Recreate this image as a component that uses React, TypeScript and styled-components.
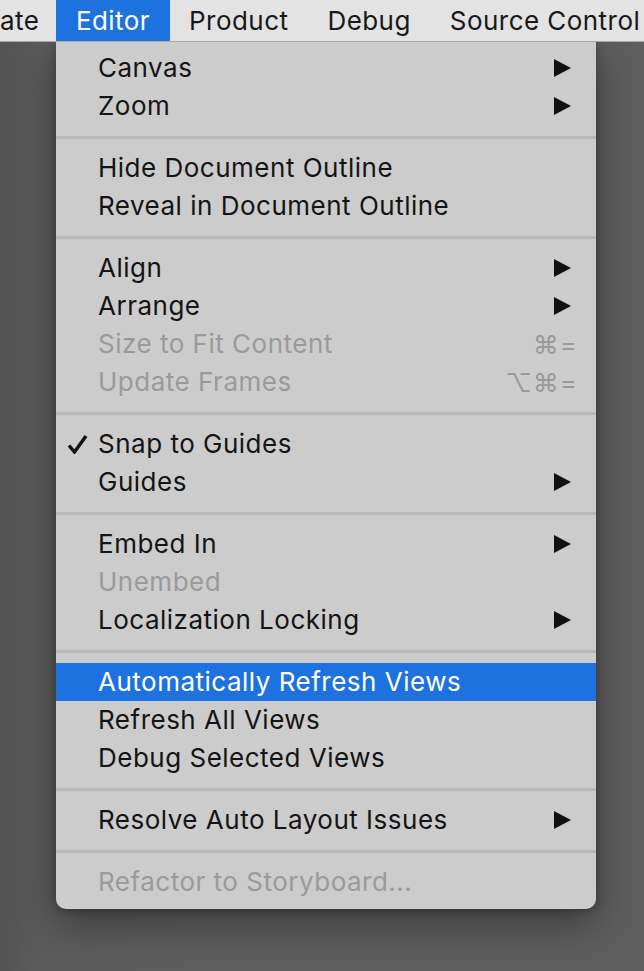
import React from "react";
import styled, { createGlobalStyle } from "styled-components";

const GlobalStyle = createGlobalStyle`
  html, body {
    margin: 0;
    padding: 0;
    background: #5e5e5e;
  }
  body {
    font-family: Inter, "Noto Sans", "Liberation Sans", sans-serif;
    -webkit-font-smoothing: antialiased;
  }
`;

const Screen = styled.div`
  width: 644px;
  height: 971px;
  overflow: hidden;
  background: linear-gradient(90deg, #535353 0px, #5b5b5b 40px, #5e5e5e 200px);
  display: flex;
  flex-direction: column;
`;

const MenuBar = styled.div`
  height: 42px;
  flex: 0 0 42px;
  background: #e3e3e3;
  border-bottom: 1px solid #a9a9a9;
  box-sizing: border-box;
  display: flex;
  align-items: stretch;
  white-space: nowrap;
  position: relative;
  z-index: 2;
`;

const BarItem = styled.div<{ $active?: boolean; $first?: boolean }>`
  display: flex;
  align-items: center;
  padding: 0 ${(p) => (p.$first ? "17px" : "19.5px")} 0 ${(p) => (p.$first ? "0" : "19.5px")};
  font-size: 26px;
  letter-spacing: 0.45px;
  color: ${(p) => (p.$active ? "#ffffff" : "#181818")};
  background: ${(p) => (p.$active ? "#1d72e0" : "transparent")};
`;

const Menu = styled.div`
  margin-left: 56px;
  width: 540px;
  background: #cccccc;
  border-radius: 0 0 10px 10px;
  box-shadow: 0 14px 40px rgba(0, 0, 0, 0.38), 0 2px 8px rgba(0, 0, 0, 0.25);
  padding: 7px 0 8px;
  display: flex;
  flex-direction: column;
  position: relative;
  z-index: 1;
`;

const Item = styled.div<{ $disabled?: boolean; $active?: boolean }>`
  height: 38px;
  display: grid;
  grid-template-columns: 42px 1fr auto;
  align-items: center;
  padding-right: 21px;
  font-size: 26px;
  letter-spacing: 0.5px;
  color: ${(p) => (p.$active ? "#ffffff" : p.$disabled ? "#9a9a9a" : "#141414")};
  background: ${(p) => (p.$active ? "#1d72e0" : "transparent")};
`;

const CheckCell = styled.div`
  display: flex;
  align-items: center;
  justify-content: flex-end;
  padding-right: 10px;
`;

const Label = styled.span`
  line-height: 38px;
  white-space: nowrap;
`;

const Shortcut = styled.span`
  color: #9a9a9a;
  font-size: 26px;
  letter-spacing: 1px;
  margin-right: -3px;
`;

const Arrow = styled.svg`
  width: 18px;
  height: 18px;
  margin-right: 3px;
  display: block;
`;

const Separator = styled.div`
  height: 3px;
  margin: 11px 0 10px;
  background: #b9b9b9;
`;

type Entry =
  | { sep: true }
  | {
      sep?: false;
      label: string;
      submenu?: boolean;
      disabled?: boolean;
      checked?: boolean;
      active?: boolean;
      shortcut?: string;
    };

const entries: Entry[] = [
  { label: "Canvas", submenu: true },
  { label: "Zoom", submenu: true },
  { sep: true },
  { label: "Hide Document Outline" },
  { label: "Reveal in Document Outline" },
  { sep: true },
  { label: "Align", submenu: true },
  { label: "Arrange", submenu: true },
  { label: "Size to Fit Content", disabled: true, shortcut: "⌘=" },
  { label: "Update Frames", disabled: true, shortcut: "⌥⌘=" },
  { sep: true },
  { label: "Snap to Guides", checked: true },
  { label: "Guides", submenu: true },
  { sep: true },
  { label: "Embed In", submenu: true },
  { label: "Unembed", disabled: true },
  { label: "Localization Locking", submenu: true },
  { sep: true },
  { label: "Automatically Refresh Views", active: true },
  { label: "Refresh All Views" },
  { label: "Debug Selected Views" },
  { sep: true },
  { label: "Resolve Auto Layout Issues", submenu: true },
  { sep: true },
  { label: "Refactor to Storyboard...", disabled: true },
];

const CheckIcon = () => (
  <svg width="21" height="20" viewBox="0 0 21 20">
    <path
      d="M2 11.5 L7.5 18 L19 2"
      fill="none"
      stroke="#111"
      strokeWidth="3.4"
      strokeLinecap="butt"
      strokeLinejoin="miter"
    />
  </svg>
);

const SubmenuArrow = () => (
  <Arrow viewBox="0 0 18 18">
    <polygon points="0,0 17,9 0,18" fill="#111" />
  </Arrow>
);

export default function App() {
  return (
    <Screen>
      <GlobalStyle />
      <MenuBar>
        <BarItem $first>ate</BarItem>
        <BarItem $active>Editor</BarItem>
        <BarItem>Product</BarItem>
        <BarItem>Debug</BarItem>
        <BarItem>Source Control</BarItem>
      </MenuBar>
      <Menu>
        {entries.map((e, i) =>
          e.sep ? (
            <Separator key={i} />
          ) : (
            <Item key={i} $disabled={e.disabled} $active={e.active}>
              <CheckCell>{e.checked ? <CheckIcon /> : null}</CheckCell>
              <Label>{e.label}</Label>
              {e.submenu ? (
                <SubmenuArrow />
              ) : e.shortcut ? (
                <Shortcut>{e.shortcut}</Shortcut>
              ) : (
                <span />
              )}
            </Item>
          )
        )}
      </Menu>
    </Screen>
  );
}
